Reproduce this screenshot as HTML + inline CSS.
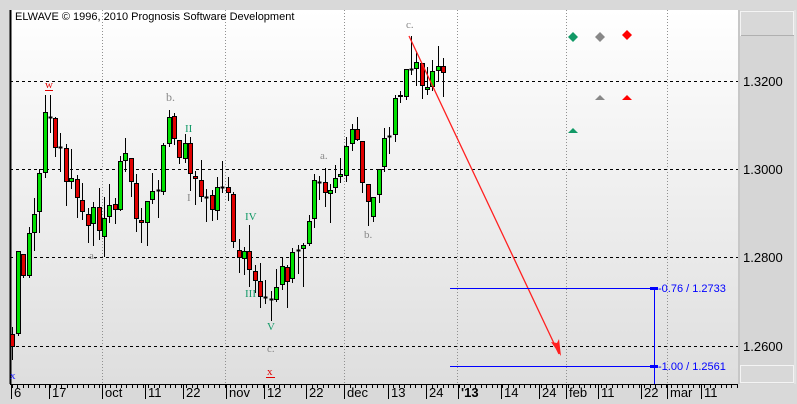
<!DOCTYPE html>
<html><head><meta charset="utf-8">
<style>
html,body{margin:0;padding:0;background:#d9d9d9;width:797px;height:404px;overflow:hidden;font-family:"Liberation Sans",sans-serif}
svg{position:absolute;left:0;top:0}
</style></head><body>
<svg id="s" width="797" height="404" xmlns="http://www.w3.org/2000/svg" font-family="Liberation Sans, sans-serif">
<defs>
<linearGradient id="g" x1="0" y1="0" x2="0" y2="1"><stop offset="0" stop-color="#ffffff"/><stop offset="1" stop-color="#dedede"/></linearGradient>
</defs>
<rect x="0" y="0" width="797" height="404" fill="#d9d9d9"/>
<rect x="10" y="10" width="728" height="374" fill="url(#g)"/>
<rect x="738" y="10" width="58" height="374" fill="#d6d6d6"/>
<line x1="739" y1="10" x2="739" y2="384" stroke="#b8b8b8"/>
<rect x="740.5" y="11.5" width="53" height="24" fill="#d8d8d8" stroke="#f4f4f4"/>
<line x1="741" y1="35.5" x2="794" y2="35.5" stroke="#b0b0b0"/>
<rect x="740.5" y="365.5" width="53" height="17" fill="#d8d8d8" stroke="#f4f4f4"/>
<line x1="795" y1="10" x2="795" y2="384" stroke="#eeeeee"/>
<g font-size="13" fill="#000">
<text x="743" y="86">1.3200</text>
<text x="743" y="174">1.3000</text>
<text x="743" y="262">1.2800</text>
<text x="743" y="351">1.2600</text>
</g>
<g stroke="#000" stroke-dasharray="3,3" stroke-width="1">
<line x1="10" y1="81.5" x2="738" y2="81.5"/>
<line x1="10" y1="169.5" x2="738" y2="169.5"/>
<line x1="10" y1="257.5" x2="738" y2="257.5"/>
<line x1="10" y1="346.5" x2="738" y2="346.5"/>
</g>
<g stroke="#909090" stroke-dasharray="1,2" stroke-width="1">
<line x1="102.5" y1="10" x2="102.5" y2="384"/>
<line x1="225.5" y1="10" x2="225.5" y2="384"/>
<line x1="344.5" y1="10" x2="344.5" y2="384"/>
<line x1="457.5" y1="10" x2="457.5" y2="384"/>
<line x1="566.5" y1="10" x2="566.5" y2="384"/>
<line x1="667.5" y1="10" x2="667.5" y2="384"/>
</g>
<line x1="10.5" y1="10" x2="10.5" y2="384" stroke="#000" stroke-width="2"/>
<text x="15" y="20" font-size="11" fill="#000">ELWAVE © 1996, 2010 Prognosis Software Development</text>
<g id="candles"></g>
<line x1="10" y1="384.5" x2="737" y2="384.5" stroke="#000"/>
<g id="ticks" stroke="#000"></g>
<g font-size="13" fill="#000" id="xl"></g>
<g font-family="Liberation Serif, serif" font-size="11">
<text x="45" y="88" fill="#e00000">w</text><line x1="45" y1="90.5" x2="53" y2="90.5" stroke="#e00000"/>
<text x="166" y="101" fill="#888" font-size="12">b.</text>
<text x="185" y="132" fill="#119966">II</text>
<text x="187" y="201" fill="#888">I</text>
<text x="89" y="259" fill="#888">a.</text>
<text x="245" y="220" fill="#119966">IV</text>
<text x="245" y="297" fill="#119966">III</text>
<text x="267" y="330" fill="#119966">V</text>
<text x="267" y="352" fill="#888">c.</text>
<text x="267" y="375" fill="#e00000">x</text><line x1="266" y1="377.5" x2="275" y2="377.5" stroke="#e00000"/>
<text x="320" y="159" fill="#888">a.</text>
<text x="364" y="238" fill="#888">b.</text>
<text x="406" y="28" fill="#888">c.</text>
<text x="10" y="379" fill="#2020ff">x</text>
</g>
<line x1="409" y1="36" x2="559" y2="354" stroke="#ff2020" stroke-width="1.3"/>
<polygon points="561,356 551,342 557,343 559,339" fill="#ff2020"/>
<g stroke="#0000ff" stroke-width="1">
<line x1="450" y1="288.5" x2="654" y2="288.5"/>
<line x1="450" y1="366.5" x2="654" y2="366.5"/>
<line x1="654.5" y1="288" x2="654.5" y2="384"/>
</g>
<rect x="650" y="287" width="8" height="3" fill="#0000ff"/>
<rect x="650" y="365" width="8" height="3" fill="#0000ff"/>
<g font-size="11" fill="#0000ff">
<text x="658" y="292">-0.76 / 1.2733</text>
<text x="658" y="370">-1.00 / 1.2561</text>
</g>
<polygon points="573,32 578,37 573,42 568,37" fill="#119966"/>
<polygon points="600,32 605,37 600,42 595,37" fill="#888"/>
<polygon points="627,30 632,35 627,40 622,35" fill="#f00"/>
<polygon points="600,95 605,100 595,100" fill="#888"/>
<polygon points="627,95 632,100 622,100" fill="#f00"/>
<polygon points="573,128 578,133 568,133" fill="#119966"/>
</svg>
<script>
var C=[[12,334,347,327,360],[18,334,251,251,336],[23,254,276,254,278],[29,276,233,227,278],[34,233,214,198,251],[39,212,173,169,233],[45,173,112,95,178],[50,117,117,95,133],[55,118,148,117,157],[60,147,147,133,172],[66,148,182,144,206],[71,182,178,149,189],[77,179,198,175,218],[82,200,212,183,220],[88,214,226,208,243],[93,224,207,202,246],[99,207,231,188,240],[104,237,218,197,257],[109,217,205,184,223],[115,204,210,198,224],[120,210,161,156,211],[125,161,153,138,172],[131,158,182,158,197],[136,183,219,174,232],[141,220,223,208,243],[147,223,201,201,246],[152,200,191,173,204],[158,190,190,180,218],[163,192,145,143,195],[169,144,117,110,147],[174,116,139,113,145],[179,140,158,140,164],[185,159,143,134,163],[190,143,174,137,191],[195,176,179,171,205],[201,180,197,160,202],[206,197,197,189,222],[212,195,210,190,221],[217,211,187,177,220],[222,187,187,161,193],[228,187,193,177,201],[233,194,242,192,248],[239,250,258,239,273],[244,259,251,247,275],[249,251,270,225,287],[255,271,281,265,293],[260,281,297,263,308],[265,297,297,280,304],[271,299,299,291,321],[276,300,287,269,302],[282,285,266,258,290],[287,267,282,265,308],[292,279,252,248,283],[298,250,250,245,274],[303,249,245,243,287],[309,244,221,215,246],[314,219,180,174,228],[319,182,182,176,200],[325,182,193,168,207],[330,194,190,184,223],[335,188,178,165,193],[340,177,174,158,183],[346,176,146,137,182],[352,144,129,124,151],[357,129,140,117,141],[362,141,183,141,193],[368,184,202,184,226],[373,217,197,197,222],[379,195,169,169,203],[384,167,138,128,172],[389,136,136,127,154],[395,135,98,95,142],[400,95,97,91,103],[406,97,69,69,100],[411,69,69,36,75],[416,69,62,51,86],[422,63,86,63,99],[427,90,87,67,95],[432,87,71,60,91],[438,71,66,46,81],[443,66,73,58,97]];
var ns="http://www.w3.org/2000/svg",g=document.getElementById("candles");
function el(t,a,p){var e=document.createElementNS(ns,t);for(var k in a)e.setAttribute(k,a[k]);(p||g).appendChild(e);return e;}
C.forEach(function(c){var x=c[0],o=c[1],cl=c[2],h=c[3],l=c[4];
el("line",{x1:x+0.5,y1:h,x2:x+0.5,y2:l,stroke:"#000","stroke-width":1});
var t=Math.min(o,cl),b=Math.max(o,cl);
if(b-t<2){el("rect",{x:x-1.5,y:t-0.5,width:4,height:2,fill:"#000"});}
else{el("rect",{x:x-1.5,y:t+0.5,width:4,height:b-t-1,fill:o>cl?"#00e000":"#e00000",stroke:"#000","stroke-width":1});}
});
var tk=document.getElementById("ticks");
for(var x=12;x<737;x+=5.45){el("line",{x1:Math.round(x)+0.5,y1:384,x2:Math.round(x)+0.5,y2:388},tk);}
var L=[[11,"6"],[49,"17"],[102,"oct"],[145,"11"],[183,"22"],[226,"nov"],[264,"12"],[306,"22"],[344,"dec"],[388,"13"],[426,"24"],[458,"'13"],[501,"14"],[539,"24"],[566,"feb"],[598,"11"],[641,"22"],[667,"mar"],[701,"11"]];
var xl=document.getElementById("xl");
L.forEach(function(a){el("line",{x1:a[0]+0.5,y1:384,x2:a[0]+0.5,y2:399,stroke:"#000"},xl);var t=el("text",{x:a[0]+3,y:397},xl);t.textContent=a[1];if(a[1]=="'13")t.setAttribute("font-weight","bold");});
</script>
</body></html>
